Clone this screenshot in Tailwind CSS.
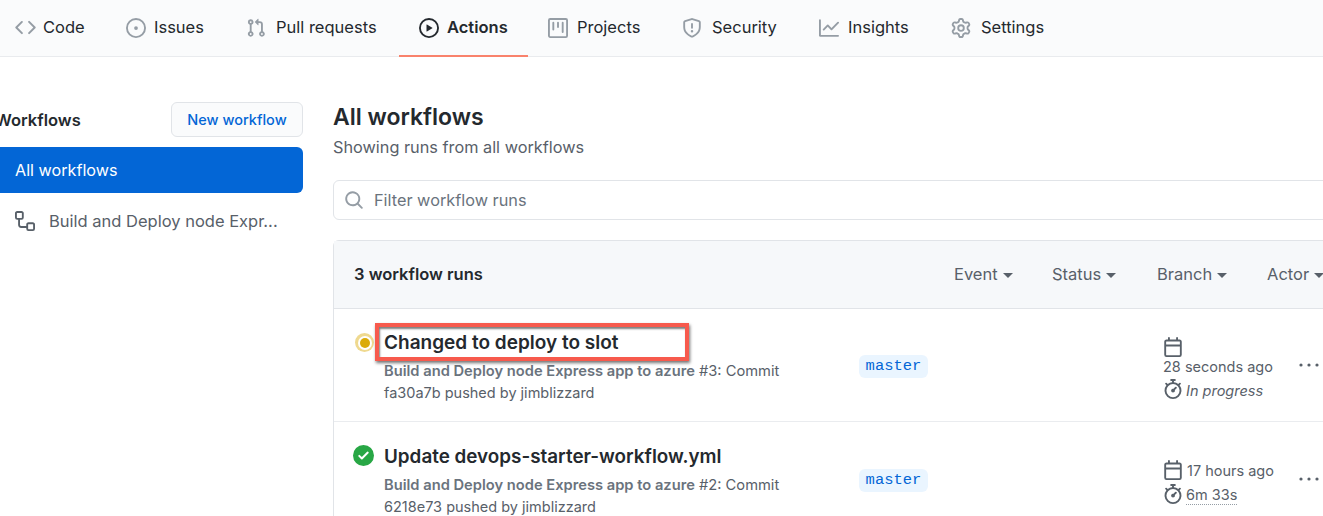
<!DOCTYPE html>
<html lang="en">
<head>
  <meta charset="UTF-8">
  <meta name="viewport" content="width=device-width, initial-scale=1.0">
  <script src="https://cdn.jsdelivr.net/npm/@tailwindcss/browser@4"></script>
  <title>Actions</title>
</head>
<body class="h-[516px] overflow-hidden bg-white font-['Inter',sans-serif] text-[#24292e]">
  <!-- repo tabs -->
  <nav class="flex h-[57px] border-b border-[#e9ebee] bg-[#fafbfc] pl-[15px] text-[16.5px] text-[#24292e]">
    <a class="flex h-[57px] w-[91px] items-center gap-[7px] border-b-2 border-transparent">
      <svg class="size-[21px] fill-[#959da5]" viewBox="0 0 16 16"><path d="M4.72 3.22a.75.75 0 011.06 1.06L2.06 8l3.72 3.72a.75.75 0 11-1.06 1.06L.47 8.53a.75.75 0 010-1.06l4.25-4.25zm6.56 0a.75.75 0 10-1.06 1.06L13.94 8l-3.72 3.72a.75.75 0 101.06 1.06l4.25-4.25a.75.75 0 000-1.06l-4.25-4.25z"/></svg>
      Code
    </a>
    <a class="ml-5 flex h-[57px] w-[120px] items-center gap-2 border-b-2 border-transparent">
      <svg class="size-5 fill-[#959da5]" viewBox="0 0 16 16"><path d="M8 9.5a1.5 1.5 0 100-3 1.5 1.5 0 000 3z"/><path fill-rule="evenodd" d="M8 0a8 8 0 100 16A8 8 0 008 0zM1.5 8a6.5 6.5 0 1113 0 6.5 6.5 0 01-13 0z"/></svg>
      Issues
    </a>
    <a class="flex h-[57px] w-[153px] items-center gap-[10px] border-b-2 border-transparent">
      <svg class="size-5 fill-[#959da5]" viewBox="0 0 16 16"><path fill-rule="evenodd" d="M7.177 3.073L9.573.677A.25.25 0 0110 .854v4.792a.25.25 0 01-.427.177L7.177 3.427a.25.25 0 010-.354zM3.75 2.5a.75.75 0 100 1.5.75.75 0 000-1.5zm-2.25.75a2.25 2.25 0 113 2.122v5.256a2.251 2.251 0 11-1.5 0V5.372A2.25 2.25 0 011.5 3.25zM11 2.5h-1V4h1a1 1 0 011 1v5.628a2.251 2.251 0 101.5 0V5A2.5 2.5 0 0011 2.5zm1 10.25a.75.75 0 111.5 0 .75.75 0 01-1.5 0zM3.75 12a.75.75 0 100 1.5.75.75 0 000-1.5z"/></svg>
      Pull requests
    </a>
    <a class="flex h-[57px] w-[129px] items-center gap-[8px] border-b-2 border-[#f9826c] pl-5 font-semibold">
      <svg class="size-5 fill-[#24292e]" viewBox="0 0 16 16"><path fill-rule="evenodd" d="M1.5 8a6.5 6.5 0 1113 0 6.5 6.5 0 01-13 0zM8 0a8 8 0 100 16A8 8 0 008 0zM6.379 5.227A.25.25 0 006 5.442v5.117a.25.25 0 00.379.214l4.264-2.559a.25.25 0 000-.428L6.379 5.227z"/></svg>
      Actions
    </a>
    <a class="ml-5 flex h-[57px] w-[134px] items-center gap-[9px] border-b-2 border-transparent">
      <svg class="size-5 fill-[#959da5]" viewBox="0 0 16 16"><path fill-rule="evenodd" d="M1.75 0A1.75 1.75 0 000 1.75v12.5C0 15.216.784 16 1.75 16h12.5A1.75 1.75 0 0016 14.25V1.75A1.75 1.75 0 0014.25 0H1.75zM1.5 1.75a.25.25 0 01.25-.25h12.5a.25.25 0 01.25.25v12.5a.25.25 0 01-.25.25H1.75a.25.25 0 01-.25-.25V1.75zM11.75 3a.75.75 0 00-.75.75v7.5a.75.75 0 001.5 0v-7.5a.75.75 0 00-.75-.75zm-8.25.75a.75.75 0 011.5 0v5.5a.75.75 0 01-1.5 0v-5.5zM8 3a.75.75 0 00-.75.75v3.5a.75.75 0 001.5 0v-3.5A.75.75 0 008 3z"/></svg>
      Projects
    </a>
    <a class="flex h-[57px] w-[137px] items-center gap-[10px] border-b-2 border-transparent">
      <svg class="size-5 fill-[#959da5]" viewBox="0 0 16 16"><path fill-rule="evenodd" d="M7.467.133a1.75 1.75 0 011.066 0l5.25 1.68A1.75 1.75 0 0115 3.48V7c0 1.566-.32 3.182-1.303 4.682-.983 1.498-2.585 2.813-5.032 3.855a1.7 1.7 0 01-1.33 0c-2.447-1.042-4.049-2.357-5.032-3.855C1.32 10.182 1 8.566 1 7V3.48a1.75 1.75 0 011.217-1.667l5.25-1.68zm.61 1.429a.25.25 0 00-.153 0l-5.25 1.68a.25.25 0 00-.174.238V7c0 1.358.275 2.666 1.057 3.86.784 1.194 2.121 2.34 4.366 3.297a.2.2 0 00.154 0c2.245-.956 3.582-2.104 4.366-3.298C13.225 9.666 13.5 8.36 13.5 7V3.48a.25.25 0 00-.174-.237l-5.25-1.68zM9 10.5a1 1 0 11-2 0 1 1 0 012 0zm-.25-5.75a.75.75 0 10-1.5 0v3a.75.75 0 001.5 0v-3z"/></svg>
      Security
    </a>
    <a class="flex h-[57px] w-[132px] items-center gap-[9px] border-b-2 border-transparent">
      <svg class="size-5 fill-[#959da5]" viewBox="0 0 16 16"><path fill-rule="evenodd" d="M1.5 1.75a.75.75 0 00-1.5 0v12.5c0 .414.336.75.75.75h14.5a.75.75 0 000-1.5H1.5V1.75zm14.28 2.53a.75.75 0 00-1.06-1.06L10 7.94 7.53 5.47a.75.75 0 00-1.06 0L3.22 8.72a.75.75 0 001.06 1.06L7 7.06l2.47 2.47a.75.75 0 001.06 0l5.25-5.25z"/></svg>
      Insights
    </a>
    <a class="flex h-[57px] items-center gap-[10px] border-b-2 border-transparent">
      <svg class="size-5 fill-[#959da5]" viewBox="0 0 16 16"><path fill-rule="evenodd" d="M7.429 1.525a6.593 6.593 0 011.142 0c.036.003.108.036.137.146l.289 1.105c.147.56.55.967.997 1.189.174.086.341.183.501.29.417.278.97.423 1.53.27l1.102-.303c.11-.03.175.016.195.046.219.31.41.641.573.989.014.031.022.11-.059.19l-.815.806c-.411.406-.562.957-.53 1.456a4.588 4.588 0 010 .582c-.032.499.119 1.05.53 1.456l.815.806c.08.08.073.159.059.19a6.494 6.494 0 01-.573.99c-.02.029-.086.074-.195.045l-1.103-.303c-.559-.153-1.112-.008-1.529.27-.16.107-.327.204-.5.29-.449.222-.851.628-.998 1.189l-.289 1.105c-.029.11-.101.143-.137.146a6.613 6.613 0 01-1.142 0c-.036-.003-.108-.037-.137-.146l-.289-1.105c-.147-.56-.55-.967-.997-1.189a4.502 4.502 0 01-.501-.29c-.417-.278-.97-.423-1.53-.27l-1.102.303c-.11.03-.175-.016-.195-.046a6.492 6.492 0 01-.573-.989c-.014-.031-.022-.11.059-.19l.815-.806c.411-.406.562-.957.53-1.456a4.587 4.587 0 010-.582c.032-.499-.119-1.05-.53-1.456l-.815-.806c-.08-.08-.073-.159-.059-.19a6.44 6.44 0 01.573-.99c.02-.029.086-.075.195-.045l1.103.303c.559.153 1.112.008 1.529-.27.16-.107.327-.204.5-.29.449-.222.851-.628.998-1.189l.289-1.105c.029-.11.101-.143.137-.146zM8 0c-.236 0-.47.01-.701.03-.743.065-1.29.615-1.458 1.261l-.29 1.106c-.017.066-.078.158-.211.224a5.994 5.994 0 00-.668.386c-.123.082-.233.09-.3.071L3.27 2.776c-.644-.177-1.392.02-1.82.63a7.977 7.977 0 00-.704 1.217c-.315.675-.111 1.422.363 1.891l.815.806c.05.048.098.147.088.294a6.084 6.084 0 000 .772c.01.147-.038.246-.088.294l-.815.806c-.474.469-.678 1.216-.363 1.891.2.428.436.835.704 1.218.428.609 1.176.806 1.82.63l1.103-.303c.066-.019.176-.011.299.071.213.143.436.272.668.386.133.066.194.158.212.224l.289 1.106c.169.646.715 1.196 1.458 1.26a8.094 8.094 0 001.402 0c.743-.064 1.29-.614 1.458-1.26l.29-1.106c.017-.066.078-.158.211-.224a5.98 5.98 0 00.668-.386c.123-.082.233-.09.3-.071l1.102.302c.644.177 1.392-.02 1.82-.63.268-.382.505-.789.704-1.217.315-.675.111-1.422-.364-1.891l-.814-.806c-.05-.048-.098-.147-.088-.294a6.1 6.1 0 000-.772c-.01-.147.039-.246.088-.294l.814-.806c.475-.469.679-1.216.364-1.891a7.992 7.992 0 00-.704-1.218c-.428-.609-1.176-.806-1.82-.63l-1.103.303c-.066.019-.176.011-.299-.071a5.991 5.991 0 00-.668-.386c-.133-.066-.194-.158-.212-.224L10.16 1.29C9.99.645 9.444.095 8.701.031A8.094 8.094 0 008 0zm1.5 8a1.5 1.5 0 11-3 0 1.5 1.5 0 013 0zM11 8a3 3 0 11-6 0 3 3 0 016 0z"/></svg>
      Settings
    </a>
  </nav>

  <div class="flex w-[1500px] pt-[45px]">
    <!-- sidebar -->
    <aside class="ml-[-15px] w-[318px] shrink-0">
      <div class="flex h-[45px] items-start justify-between pl-[10px]">
        <h2 class="pt-[6px] text-[16.5px] leading-[24px] font-semibold">Workflows</h2>
        <button class="h-[35px] w-[132px] rounded-[6px] border border-[#e1e4e8] bg-[#fafbfc] text-[14.5px] font-medium text-[#0366d6]">New workflow</button>
      </div>
      <a class="flex h-[46px] items-center rounded-r-[6px] bg-[#0366d6] pl-[30px] text-[16.2px] text-white">All workflows</a>
      <a class="flex h-[56px] items-center gap-[14px] pl-[30px] text-[16.5px] text-[#586069]">
        <svg class="size-[20px] shrink-0 fill-[#586069]" viewBox="0 0 16 16"><path fill-rule="evenodd" d="M0 1.75C0 .784.784 0 1.75 0h3.5C6.216 0 7 .784 7 1.75v3.5A1.75 1.75 0 015.25 7H4v4a1 1 0 001 1h4v-1.25C9 9.784 9.784 9 10.75 9h3.5c.966 0 1.75.784 1.75 1.75v3.5A1.75 1.75 0 0114.25 16h-3.5A1.75 1.75 0 019 14.25v-.75H5A2.5 2.5 0 012.5 11V7h-.75A1.75 1.75 0 010 5.25v-3.5zm1.75-.25a.25.25 0 00-.25.25v3.5c0 .138.112.25.25.25h3.5a.25.25 0 00.25-.25v-3.5a.25.25 0 00-.25-.25h-3.5zm9 9a.25.25 0 00-.25.25v3.5c0 .138.112.25.25.25h3.5a.25.25 0 00.25-.25v-3.5a.25.25 0 00-.25-.25h-3.5z"/></svg>
        Build and Deploy node Expr...
      </a>
    </aside>

    <!-- main column -->
    <main class="ml-[30px] w-[1100px]">
      <h1 class="text-[23px] leading-[30px] font-semibold">All workflows</h1>
      <p class="mt-[3px] text-[16.3px] leading-[24px] text-[#586069]">Showing runs from all workflows</p>
      <div class="mt-[21px] flex h-[40px] items-center gap-[10px] rounded-[6px] border border-[#e1e4e8] pl-[10px] text-[16.3px] text-[#6a737d]">
        <svg class="size-5 fill-[#959da5]" viewBox="0 0 16 16"><path fill-rule="evenodd" d="M11.5 7a4.499 4.499 0 11-8.998 0A4.499 4.499 0 0111.5 7zm-.82 4.74a6 6 0 111.06-1.06l3.04 3.04a.75.75 0 11-1.06 1.06l-3.04-3.04z"/></svg>
        <span class="pt-[1px]">Filter workflow runs</span>
      </div>

      <section class="mt-[20px] rounded-t-[6px] border border-[#e1e4e8]">
        <div class="flex h-[68px] items-center border-b border-[#e1e4e8] bg-[#f6f8fa] pl-[20px] text-[16.5px] text-[#586069]">
          <span class="w-[600px] font-semibold text-[#24292e]">3 workflow runs</span>
          <div class="flex gap-[3px]">
            <span class="flex w-[95px] items-center gap-[5px]">Event <i class="mt-[2px] border-x-[5px] border-t-[5px] border-x-transparent border-t-[#586069]"></i></span>
            <span class="flex w-[102px] items-center gap-[5px]">Status <i class="mt-[2px] border-x-[5px] border-t-[5px] border-x-transparent border-t-[#586069]"></i></span>
            <span class="flex w-[107px] items-center gap-[5px]">Branch <i class="mt-[2px] border-x-[5px] border-t-[5px] border-x-transparent border-t-[#586069]"></i></span>
            <span class="flex items-center gap-[5px]">Actor <i class="mt-[2px] border-x-[5px] border-t-[5px] border-x-transparent border-t-[#586069]"></i></span>
          </div>
        </div>

        <!-- run 1 -->
        <div class="relative flex h-[113px] border-b border-[#eaecef]">
          <div class="ml-[21px] mt-[24px] flex size-[19px] items-center justify-center rounded-full bg-[#efd98f]">
            <div class="flex size-[14px] items-center justify-center rounded-full bg-white">
              <div class="size-[10px] rounded-full bg-[#dbab09]"></div>
            </div>
          </div>
          <div class="ml-[10px] w-[475px] pt-[21px]">
            <h3 class="text-[19px] leading-[26px] font-semibold">Changed to deploy to slot</h3>
            <p class="mt-[4px] text-[14.7px] leading-[22px] text-[#586069]"><b class="font-semibold text-[#6a737d]">Build and Deploy node Express app to azure</b> #3: Commit<br><span class="text-[14.5px]">fa30a7b pushed by jimblizzard</span></p>
          </div>
          <div class="pt-[46px]"><span class="block h-[23px] w-[69px] rounded-[6px] bg-[#eaf5ff] text-center font-['Liberation_Mono',monospace] text-[15.5px] leading-[23px] text-[#0366d6]">master</span></div>
          <div class="ml-[235px] w-[135px] pt-[28px] text-[14.5px] text-[#586069]">
            <svg class="size-5 fill-[#586069]" viewBox="0 0 16 16"><path fill-rule="evenodd" d="M4.75 0a.75.75 0 01.75.75V2h5V.75a.75.75 0 011.5 0V2h1.25c.966 0 1.75.784 1.75 1.75v10.5A1.75 1.75 0 0113.25 16H2.75A1.75 1.75 0 011 14.25V3.75C1 2.784 1.784 2 2.75 2H4V.75A.75.75 0 014.75 0zm0 3.5H2.75a.25.25 0 00-.25.25V6h11V3.75a.25.25 0 00-.25-.25h-8.5zM2.5 7.5v6.75c0 .138.112.25.25.25h10.5a.25.25 0 00.25-.25V7.5h-11z"/></svg>
            <div class="leading-[20px]">28 seconds ago</div>
            <div class="mt-[4px] flex h-5 items-center gap-[3px] italic">
              <svg class="-mt-[4px] size-5 fill-[#586069]" viewBox="0 0 16 16"><path fill-rule="evenodd" d="M5.75.75A.75.75 0 016.5 0h3a.75.75 0 010 1.5h-.75v1l-.001.041a6.718 6.718 0 013.464 1.435l.007-.006.75-.75a.75.75 0 111.06 1.06l-.75.75-.006.007a6.75 6.75 0 11-10.548 0L2.72 5.03l-.75-.75a.75.75 0 011.06-1.06l.75.75.007.006A6.718 6.718 0 017.25 2.541a.756.756 0 010-.041v-1H6.5a.75.75 0 01-.75-.75zM8 14.5A5.25 5.25 0 108 4a5.25 5.25 0 000 10.5zm.389-6.7l1.33-1.33a.75.75 0 111.061 1.06L9.45 8.861A1.502 1.502 0 018 10.75a1.5 1.5 0 11.389-2.95z"/></svg>
              In progress
            </div>
          </div>
          <svg class="mt-[45px] h-[22px] w-[22px] fill-[#586069]" viewBox="0 0 22 22"><circle cx="3" cy="11" r="1.6"/><circle cx="11" cy="11" r="1.6"/><circle cx="19" cy="11" r="1.6"/></svg>
          <!-- annotation box drawn over the screenshot -->
          <div class="absolute left-[41px] top-[14px] h-[38px] w-[314px] border-[4px] border-[#f75a4d] shadow-[1px_2px_3px_rgba(0,0,0,0.55),inset_1px_2px_2px_rgba(0,0,0,0.5)]"></div>
        </div>

        <!-- run 2 -->
        <div class="flex h-[113px]">
          <svg class="ml-[19px] mt-[23px] size-[21px] fill-[#28a745]" viewBox="0 0 16 16"><path fill-rule="evenodd" d="M8 16A8 8 0 108 0a8 8 0 000 16zm3.78-9.72a.75.75 0 00-1.06-1.06L6.75 9.19 5.28 7.72a.75.75 0 00-1.06 1.06l2 2a.75.75 0 001.06 0l4.5-4.5z"/></svg>
          <div class="ml-[10px] w-[475px] pt-[22px]">
            <h3 class="text-[18.85px] leading-[26px] font-semibold">Update devops-starter-workflow.yml</h3>
            <p class="mt-[4px] text-[14.7px] leading-[22px] text-[#586069]"><b class="font-semibold text-[#6a737d]">Build and Deploy node Express app to azure</b> #2: Commit<br><span class="text-[14.5px]">6218e73 pushed by jimblizzard</span></p>
          </div>
          <div class="pt-[47px]"><span class="block h-[23px] w-[69px] rounded-[6px] bg-[#eaf5ff] text-center font-['Liberation_Mono',monospace] text-[15.5px] leading-[23px] text-[#0366d6]">master</span></div>
          <div class="ml-[235px] w-[135px] pt-[39px] text-[14.5px] text-[#586069]">
            <div class="flex h-5 items-center gap-[4px] leading-[20px]">
              <svg class="-mt-[3px] size-5 fill-[#586069]" viewBox="0 0 16 16"><path fill-rule="evenodd" d="M4.75 0a.75.75 0 01.75.75V2h5V.75a.75.75 0 011.5 0V2h1.25c.966 0 1.75.784 1.75 1.75v10.5A1.75 1.75 0 0113.25 16H2.75A1.75 1.75 0 011 14.25V3.75C1 2.784 1.784 2 2.75 2H4V.75A.75.75 0 014.75 0zm0 3.5H2.75a.25.25 0 00-.25.25V6h11V3.75a.25.25 0 00-.25-.25h-8.5zM2.5 7.5v6.75c0 .138.112.25.25.25h10.5a.25.25 0 00.25-.25V7.5h-11z"/></svg>
              17 hours ago
            </div>
            <div class="mt-[4px] flex h-5 items-center gap-[3px]">
              <svg class="-mt-[3px] size-5 fill-[#586069]" viewBox="0 0 16 16"><path fill-rule="evenodd" d="M5.75.75A.75.75 0 016.5 0h3a.75.75 0 010 1.5h-.75v1l-.001.041a6.718 6.718 0 013.464 1.435l.007-.006.75-.75a.75.75 0 111.06 1.06l-.75.75-.006.007a6.75 6.75 0 11-10.548 0L2.72 5.03l-.75-.75a.75.75 0 011.06-1.06l.75.75.007.006A6.718 6.718 0 017.25 2.541a.756.756 0 010-.041v-1H6.5a.75.75 0 01-.75-.75zM8 14.5A5.25 5.25 0 108 4a5.25 5.25 0 000 10.5zm.389-6.7l1.33-1.33a.75.75 0 111.061 1.06L9.45 8.861A1.502 1.502 0 018 10.75a1.5 1.5 0 11.389-2.95z"/></svg>
              <span class="border-b border-dotted border-[#959da5] leading-[18px]">6m 33s</span>
            </div>
          </div>
          <svg class="mt-[46px] h-[22px] w-[22px] fill-[#586069]" viewBox="0 0 22 22"><circle cx="3" cy="11" r="1.6"/><circle cx="11" cy="11" r="1.6"/><circle cx="19" cy="11" r="1.6"/></svg>
        </div>
      </section>
    </main>
  </div>
</body>
</html>
